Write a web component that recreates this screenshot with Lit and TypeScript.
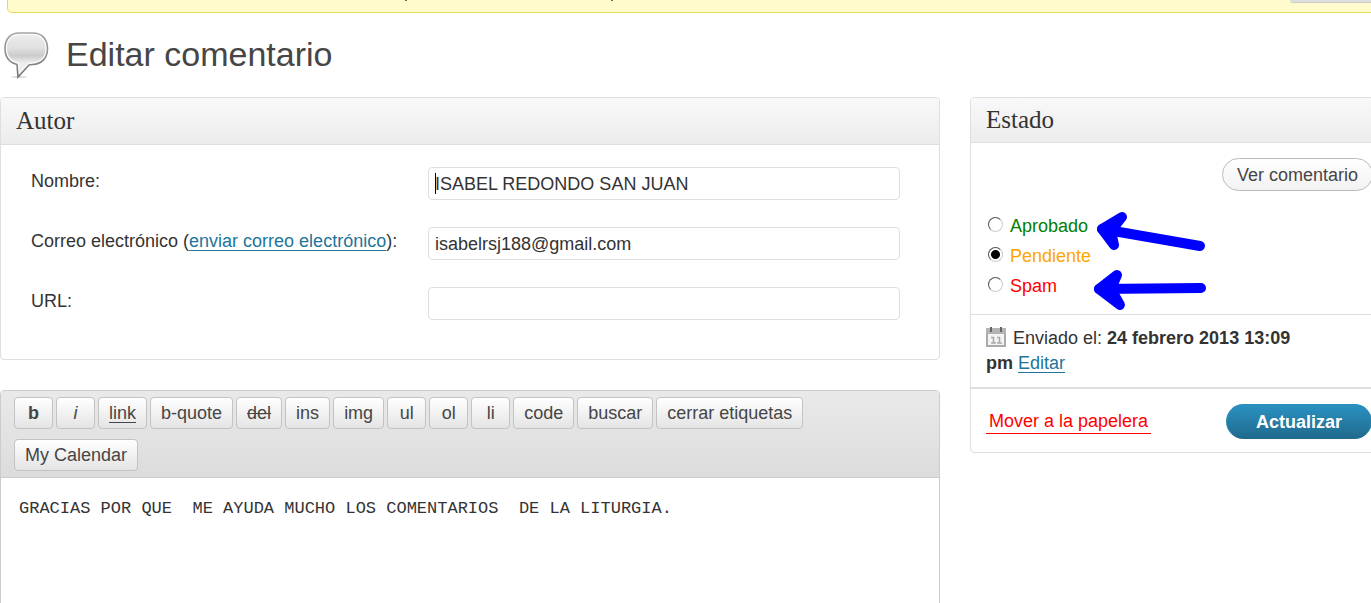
import { LitElement, html, css, svg } from "lit";
import { customElement } from "lit/decorators.js";

const tags = [
  { label: "b", cls: "bold" },
  { label: "i", cls: "italic" },
  { label: "link", cls: "under" },
  { label: "b-quote", cls: "" },
  { label: "del", cls: "strike" },
  { label: "ins", cls: "" },
  { label: "img", cls: "" },
  { label: "ul", cls: "" },
  { label: "ol", cls: "" },
  { label: "li", cls: "" },
  { label: "code", cls: "" },
  { label: "buscar", cls: "" },
  { label: "cerrar etiquetas", cls: "" },
  { label: "My Calendar", cls: "" },
];

const states = [
  { id: "approved", label: "Aprobado", cls: "green" },
  { id: "pending", label: "Pendiente", cls: "orange" },
  { id: "spam", label: "Spam", cls: "red" },
];

@customElement("app-root")
export class AppRoot extends LitElement {
  static styles = css`
    :host {
      display: block;
      height: 100vh;
      overflow: hidden;
      background: #fff;
      color: #333;
      font: 18px/24px "Liberation Sans", Arial, sans-serif;
    }
    * { box-sizing: border-box; }
    h1, h2, p { margin: 0; font-weight: normal; }
    a { color: #21759b; text-underline-offset: 3px; text-decoration-thickness: 1px; }
    .page { margin-right: -19px; }
    .notice {
      height: 13px;
      margin-left: 7px;
      background: #fffbcc;
      border: 1px solid #e6db55;
      border-top: 0;
      border-radius: 0 0 5px 5px;
      display: flex;
      justify-content: space-between;
    }
    .marks { width: 620px; height: 2px; }
    .help {
      width: 99px;
      height: 3px;
      background: #dfdfdf;
      border-bottom: 1px solid #ccc;
      border-radius: 0 0 4px 4px;
    }
    .title {
      display: flex;
      align-items: center;
      gap: 16px;
      height: 84px;
      padding: 0 0 2px 2px;
    }
    .bubble { width: 48px; height: 50px; flex: none; }
    h1 { font-size: 34px; line-height: 40px; color: #464646; }
    .columns {
      display: grid;
      grid-template-columns: minmax(0, 1fr) 420px;
      gap: 30px;
      align-items: start;
    }
    .box { border: 1px solid #dfdfdf; border-radius: 4px; background: #fff; }
    h2 {
      font: 25px/30px "Liberation Serif", Georgia, serif;
      padding: 8px 15px;
      background: linear-gradient(#f9f9f9, #ececec);
      border-bottom: 1px solid #dfdfdf;
      border-radius: 3px 3px 0 0;
    }
    .side h2 { padding: 7px 15px; }
    .fields {
      display: grid;
      grid-template-columns: 397px minmax(0, 1fr);
      row-gap: 27px;
      padding: 22px 39px 39px 30px;
    }
    .field { height: 33px; padding-top: 2px; }
    .text {
      width: 100%;
      height: 33px;
      padding: 2px 6px 1px;
      border: 1px solid #dfdfdf;
      border-radius: 4px;
      font: inherit;
      color: #333;
      outline: none;
      background: #fff;
    }
    .entry { display: grid; position: relative; }
    .caret { position: absolute; left: 7px; top: 6px; width: 1px; height: 21px; background: #000; }
    .editor { margin-top: 30px; border-color: #ccc; }
    .toolbar {
      display: flex;
      flex-wrap: wrap;
      gap: 10px 3px;
      padding: 6px 120px 6px 13px;
      border-bottom: 1px solid #ccc;
      border-radius: 3px 3px 0 0;
      background: linear-gradient(#e9e9e9, #dcdcdc);
    }
    .tag {
      height: 32px;
      min-width: 39px;
      padding: 0 10px;
      border: 1px solid #c3c3c3;
      border-radius: 4px;
      background: linear-gradient(#fff, #e4e4e4);
      color: #464646;
      font: 18px/30px "Liberation Sans", Arial, sans-serif;
    }
    .tag.bold { font-weight: bold; }
    .tag.italic { font-style: italic; }
    .tag.under { text-decoration: underline; text-underline-offset: 3px; text-decoration-thickness: 1px; }
    .tag.strike { text-decoration: line-through; }
    .content {
      display: block;
      width: 100%;
      height: 260px;
      padding: 19px 18px;
      border: 0;
      outline: none;
      resize: none;
      background: transparent;
      color: #333;
      font: 17px/24px "Liberation Mono", monospace;
    }
    .status { padding: 15px 16px 13px; border-bottom: 1px solid #dfdfdf; position: relative; }
    .view { display: flex; justify-content: flex-end; margin-bottom: 20px; }
    .pill {
      height: 33px;
      padding: 0 14px;
      border: 1px solid #bbb;
      border-radius: 17px;
      background: linear-gradient(#fff, #f2f2f2);
      color: #464646;
      font: 18px/30px "Liberation Sans", Arial, sans-serif;
    }
    .choice { display: flex; align-items: center; gap: 7px; height: 30px; }
    .radio {
      appearance: none;
      width: 15px;
      height: 15px;
      margin: 0 0 4px 1px;
      border: 1px solid;
      border-color: #555 #ccc #ccc #555;
      border-radius: 50%;
      background: #fff;
    }
    .radio:checked { background: radial-gradient(circle, #000 4px, #fff 5px); }
    .green { color: green; }
    .orange { color: orange; }
    .red { color: red; }
    .arrows { position: absolute; left: 120px; top: 66px; width: 120px; height: 104px; pointer-events: none; }
    .date { padding: 11px 15px; border-bottom: 2px solid #dfdfdf; line-height: 25px; }
    .when { width: 320px; }
    .cal { width: 20px; height: 22px; margin-right: 7px; vertical-align: -4px; }
    .actions { display: flex; align-items: center; justify-content: space-between; padding: 15px 17px 13px 15px; }
    .trash { color: red; text-decoration: none; border-bottom: 1px solid red; padding: 0 3px; line-height: 23px; }
    .save {
      width: 146px;
      height: 35px;
      border: 1px solid #298cba;
      border-bottom-color: #1f6a8c;
      border-radius: 18px;
      background: linear-gradient(#2a91c1, #216a8d);
      color: #fff;
      font: bold 18px/30px "Liberation Sans", Arial, sans-serif;
    }
  `;

  private bubble() {
    return svg`<svg class="bubble" viewBox="0 0 48 50" aria-hidden="true">
      <defs>
        <linearGradient id="fill" x1="0" y1="0" x2="0" y2="1">
          <stop offset="0" stop-color="#ececec"/><stop offset=".35" stop-color="#e0e0e0"/>
          <stop offset=".56" stop-color="#cbcbcb"/><stop offset=".75" stop-color="#ededed"/>
        </linearGradient>
        <linearGradient id="edge" x1="0" y1="0" x2="0" y2="1">
          <stop offset="0" stop-color="#a4a4a4"/><stop offset="1" stop-color="#777"/>
        </linearGradient>
      </defs>
      <ellipse cx="17" cy="48" rx="8" ry="1" fill="#ddd"/>
      <path d="M17 4H31C40 4 45.500 10.500 45.500 19.500C45.500 29 40 35 30.500 35.500L27 36L16 48L15 35.500C7.500 33.500 3 28 3 19.500C3 10.500 8 4 17 4Z" fill="#fafafa" stroke="url(#edge)" stroke-width="1.600"/>
      <path d="M18 6H30C38.500 6 43.500 12 43.500 19.500C43.500 27.500 38.500 33 30 33.500L26 34L17.500 43L17 33.500C9 32 5 26.500 5 19.500C5 12 9.500 6 18 6Z" fill="url(#fill)"/>
    </svg>`;
  }

  private calendar() {
    return svg`<svg class="cal" viewBox="0 0 20 22" aria-hidden="true">
      <path d="M1 3H19V20H1Z" fill="#f4f4f4" stroke="#aaa" stroke-width="2"/>
      <path d="M0 2H20V8H0Z" fill="#b4b4b4"/>
      <path d="M5 1V6M15 1V6" stroke="#666" stroke-width="2"/>
      <path d="M5 11.500H7.500V16.500M5 17H10M11 11.500H13.500V16.500M11 17H16" fill="none" stroke="#aaa" stroke-width="1.600"/>
    </svg>`;
  }

  private arrows() {
    return svg`<svg class="arrows" viewBox="0 0 120 104" aria-hidden="true">
      <g fill="#00f" stroke="#00f" stroke-linecap="round" stroke-linejoin="round" stroke-width="10">
        <path d="M109 37L11 20"/>
        <path d="M31 8L11 20L23 36L20 22Z"/>
        <path d="M110 79L8 80"/>
        <path d="M26 66L8 80L29 96L20 80Z"/>
      </g>
    </svg>`;
  }

  render() {
    return html`
      <div class="page">
        <div class="notice">
          <svg class="marks" viewBox="0 0 620 2" aria-hidden="true"><path d="M397 0H399V1H397ZM603 0H605V1H603Z" fill="#666"/></svg>
          <div class="help"></div>
        </div>
        <header class="title">${this.bubble()}<h1>Editar comentario</h1></header>
        <div class="columns">
          <main>
            <section class="box">
              <h2>Autor</h2>
              <div class="fields">
                <div class="field"><label for="name">Nombre:</label></div>
                <div class="entry"><input class="text" id="name" type="text" value="ISABEL REDONDO SAN JUAN" /><span class="caret"></span></div>
                <div class="field"><label for="email">Correo electrónico (<a href="mailto:isabelrsj188@gmail.com">enviar correo electrónico</a>):</label></div>
                <div class="entry"><input class="text" id="email" type="text" value="isabelrsj188@gmail.com" /></div>
                <div class="field"><label for="url">URL:</label></div>
                <div class="entry"><input class="text" id="url" type="text" /></div>
              </div>
            </section>
            <section class="box editor">
              <div class="toolbar">
                ${tags.map((t) => html`<button type="button" class="tag ${t.cls}">${t.label}</button>`)}
              </div>
              <textarea class="content" aria-label="Comentario" .value=${"GRACIAS POR QUE  ME AYUDA MUCHO LOS COMENTARIOS  DE LA LITURGIA."}></textarea>
            </section>
          </main>
          <aside class="box side">
            <h2>Estado</h2>
            <div class="status">
              <div class="view"><button type="button" class="pill">Ver comentario</button></div>
              ${states.map((s) => html`<div class="choice">
                <input class="radio" type="radio" name="status" id=${s.id} ?checked=${s.id === "pending"} />
                <label class=${s.cls} for=${s.id}>${s.label}</label>
              </div>`)}
              ${this.arrows()}
            </div>
            <div class="date"><p class="when">${this.calendar()}Enviado el: <b>24 febrero 2013 13:09</b> <b>pm</b> <a href="#fecha">Editar</a></p></div>
            <div class="actions">
              <a class="trash" href="#papelera">Mover a la papelera</a>
              <button type="button" class="save">Actualizar</button>
            </div>
          </aside>
        </div>
      </div>
    `;
  }
}
